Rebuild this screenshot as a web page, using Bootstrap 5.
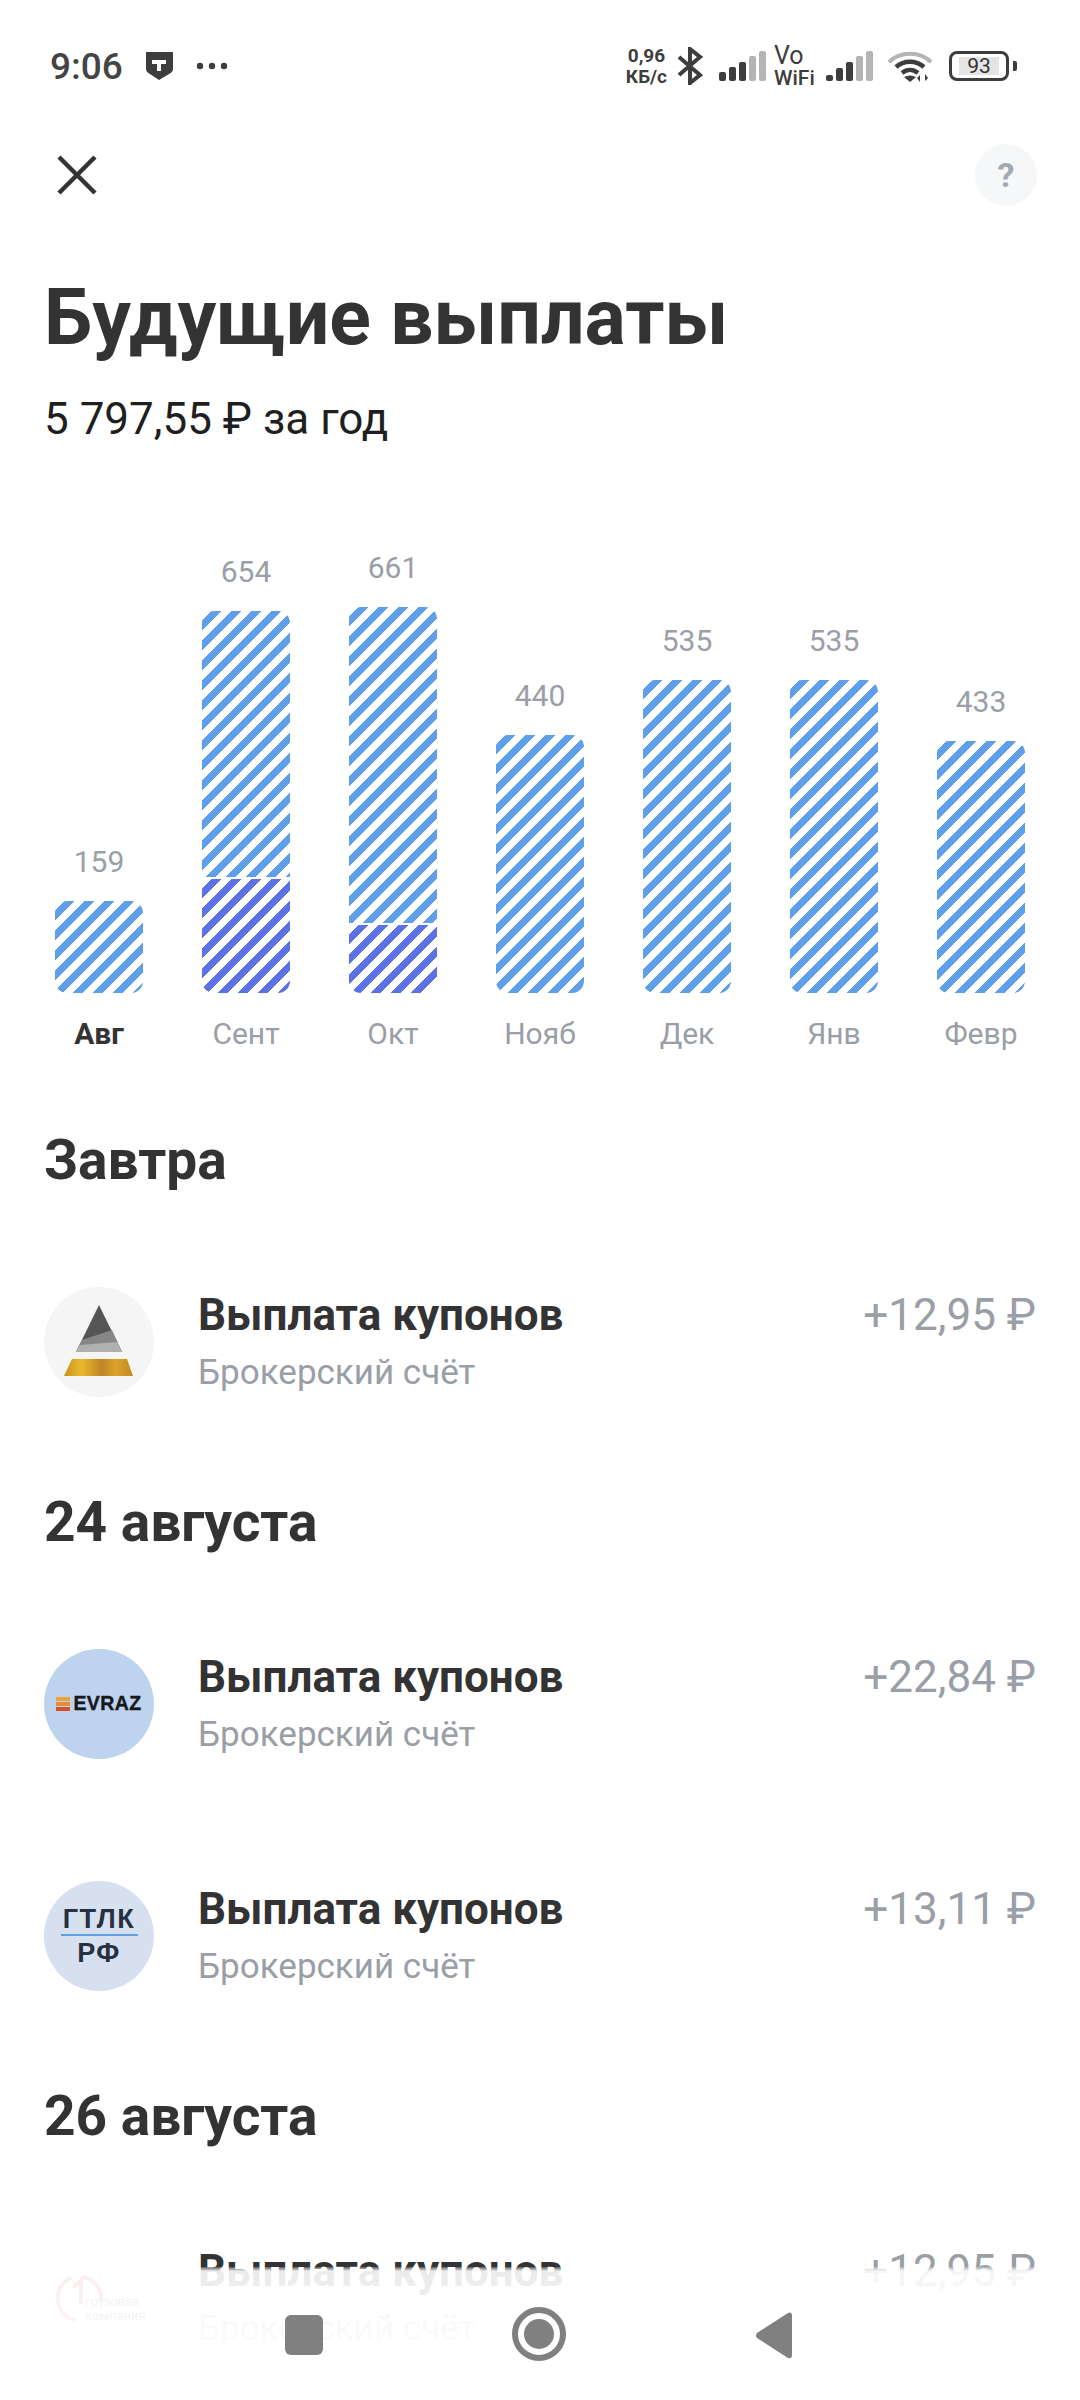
<!DOCTYPE html>
<html lang="ru">

<head>
    <meta charset="UTF-8">
    <meta name="viewport" content="width=device-width, initial-scale=1.0">
    <title>Будущие выплаты</title>
    <link href="https://cdn.jsdelivr.net/npm/bootstrap@5.3.0/dist/css/bootstrap.min.css" rel="stylesheet">
    <style>
        html, body { height: 2400px; overflow: hidden; background: #fff; }
        body { font-family: Roboto, "Liberation Sans", sans-serif; color: #333; }

        .phone-screen { width: 1080px; height: 2400px; position: relative; overflow: hidden; }

        /* status bar */
        .status-bar { height: 132px; padding: 0 63px 0 50px; }
        .status-time { font-size: 37px; font-weight: 500; line-height: 1; width: 96px; color: #444; }
        .status-dots { margin-left: 23px; }
        .status-net { font-size: 19px; font-weight: 700; line-height: 21px; color: #3d3d3d; white-space: nowrap; text-align: center; }
        .status-vo { color: #3d3d3d; width: 42px; white-space: nowrap; }
        .status-vo-top { font-size: 25px; line-height: 22px; }
        .status-vo-low { font-size: 21px; font-weight: 500; line-height: 18px; margin-top: 2px; }
        .st-gap { margin-left: 10px; }
        .st-gap-sm { margin-left: 7px; }
        .st-gap-lg { margin-left: 13px; }
        .st-gap-xl { margin-left: 16px; }
        .batt-box { width: 60px; height: 30px; border: 3px solid #3d3d3d; border-radius: 8px; padding: 3px; }
        .batt-fill { height: 100%; width: 84%; background: #e4e4e4; font-size: 21px; line-height: 18px; text-align: center; color: #333; }
        .batt-tip { width: 4px; height: 10px; background: #3d3d3d; border-radius: 0 2px 2px 0; margin-left: 4px; }

        /* top actions */
        .top-actions { height: 62px; padding: 0 43px 0 57px; margin-top: 12px; }
        .help-btn { width: 62px; height: 62px; border-radius: 50%; background: #f6f7f8; color: #a3a9b1; font-size: 34px; font-weight: 700; line-height: 1; }

        .page-title { font-size: 77px; font-weight: 700; line-height: 88px; margin: 68px 0 0 44px; color: #333; }
        .page-sum { font-size: 44px; line-height: 50px; margin: 32px 0 0 44px; color: #1f1f1f; }

        /* chart */
        .pay-chart { height: 450px; margin-top: 158px; padding: 0 55px; gap: 59px; }
        .chart-col { width: 88px; }
        .chart-val { font-size: 30px; line-height: 36px; color: #9a9ea6; margin-bottom: 21px; text-align: center; white-space: nowrap; }
        .chart-bar { border-radius: 12px; overflow: hidden; }
        .seg-blue { background: repeating-linear-gradient(135deg, #fff 0, #fff 6.5px, #5f9fea 6.5px, #5f9fea 14.14px); }
        .seg-indigo { background: repeating-linear-gradient(135deg, #fff 0, #fff 6.5px, #5d72e6 6.5px, #5d72e6 14.14px); margin-top: 2px; }
        .chart-month { font-size: 30px; line-height: 36px; color: #9a9ea6; margin: 23px -20px 0; text-align: center; }
        .chart-month.is-now { color: #333; font-weight: 700; }

        /* payments */
        .pay-feed { margin-top: 78px; }
        .pay-day { font-size: 55px; font-weight: 700; line-height: 60px; margin: 0 0 97px 44px; color: #333; }
        .pay-list { margin-bottom: 95px; gap: 122px; padding: 0 44px; }
        .pay-row { height: 110px; }
        .pay-logo { width: 110px; height: 110px; flex: none; border-radius: 50%; margin-right: 44px; }
        .pay-text { padding-top: 4px; gap: 10px; }
        .pay-name { font-size: 44px; font-weight: 700; line-height: 48px; color: #333; }
        .pay-acc { font-size: 35px; line-height: 48px; color: #9a9ea6; }
        .pay-sum { font-size: 44px; line-height: 48px; padding-top: 4px; color: #9a9ea6; }

        .logo-gold { background: #f5f5f5; }
        .logo-evraz { background: #bdd3ee; gap: 3px; }
        .evraz-name { font-family: "Liberation Sans", sans-serif; font-size: 19.5px; font-weight: 700; color: #16181c; letter-spacing: .4px; -webkit-text-stroke: .4px #16181c; }
        .evraz-flag { width: 14px; height: 14px; background: linear-gradient(#eda33a 0 30%, #bdd3ee 30% 38%, #e98a34 38% 64%, #bdd3ee 64% 72%, #d8502c 72%); }
        .logo-gtlk { background: #d7e0ef; color: #27303f; font-family: "Liberation Sans", sans-serif; font-weight: 700; }
        .gtlk-top { font-size: 27px; line-height: 28px; letter-spacing: 1.5px; }
        .gtlk-line { width: 77px; height: 2px; background: #62a0e6; margin: 1px 0 3px; }
        .gtlk-low { font-size: 27px; line-height: 28px; letter-spacing: 1.5px; }
        .logo-cargo { padding-left: 12px; }
        .cargo-name { font-size: 13px; line-height: 14px; color: #555; margin: 22px 0 0 -19px; white-space: nowrap; }

        /* nav bar over list */
        .nav-fade { position: absolute; left: 0; right: 0; bottom: 0; height: 133px;
            background: linear-gradient(rgba(255,255,255,.2) 0, rgba(255,255,255,.9) 4px, rgba(255,255,255,.94) 60px, #fff 100%); }
        .nav-btns { position: absolute; left: 0; right: 0; top: 2307px; height: 55px; }
        .nav-square { width: 38px; height: 40px; border-radius: 6px; background: #808080; position: absolute; left: 285px; top: 8px; }
        .nav-round { width: 54px; height: 54px; border-radius: 50%; border: 6px solid #808080; padding: 6px; position: absolute; left: 512px; top: 0; }
        .nav-round span { display: block; width: 30px; height: 30px; border-radius: 50%; background: #808080; }
        .nav-back { position: absolute; left: 755px; top: 5px; }
    </style>
</head>

<body>
    <div class="phone-screen">
        <!-- status bar -->
        <div class="status-bar d-flex align-items-center">
            <div class="status-time">9:06</div>
            <svg width="27" height="28" viewBox="0 0 27 28">
                <path d="M0 0h27v17q0 3-4 5l-10 6-9-6q-4-2-4-5z" fill="#3d3d3d" />
                <path d="M6 8h14v4h-5v7h-4v-7H6z" fill="#fff" />
            </svg>
            <svg class="status-dots" width="32" height="8" viewBox="0 0 32 8" fill="#3d3d3d">
                <circle cx="4" cy="4" r="3.2" />
                <circle cx="16" cy="4" r="3.2" />
                <circle cx="28" cy="4" r="3.2" />
            </svg>
            <div class="ms-auto d-flex align-items-center">
                <div class="status-net">0,96<br>КБ/с</div>
                <svg class="st-gap" width="26" height="38" viewBox="0 0 26 38" fill="none" stroke="#3d3d3d" stroke-width="4">
                    <path d="M2 10l21 18-10 8V2l10 8L2 28" />
                </svg>
                <svg class="st-gap-xl" width="48" height="30" viewBox="0 0 48 30">
                    <rect x="0" y="21" width="7" height="9" rx="2" fill="#3d3d3d" />
                    <rect x="10" y="16" width="7" height="14" rx="2" fill="#3d3d3d" />
                    <rect x="20" y="11" width="7" height="19" rx="2" fill="#3d3d3d" />
                    <rect x="30" y="5" width="7" height="25" rx="2" fill="#b4b4b4" />
                    <rect x="40" y="0" width="7" height="30" rx="2" fill="#b4b4b4" />
                </svg>
                <div class="status-vo st-gap-sm">
                    <div class="status-vo-top">Vo</div>
                    <div class="status-vo-low">WiFi</div>
                </div>
                <svg class="st-gap" width="48" height="30" viewBox="0 0 48 30">
                    <rect x="0" y="24" width="7" height="6" rx="2" fill="#3d3d3d" />
                    <rect x="10" y="17" width="7" height="13" rx="2" fill="#3d3d3d" />
                    <rect x="20" y="11" width="7" height="19" rx="2" fill="#3d3d3d" />
                    <rect x="30" y="5" width="7" height="25" rx="2" fill="#b4b4b4" />
                    <rect x="40" y="0" width="7" height="30" rx="2" fill="#b4b4b4" />
                </svg>
                <svg class="st-gap-lg" width="46" height="32" viewBox="0 0 46 32" fill="none">
                    <path d="M2 12C13 1 33 1 44 12" stroke="#b4b4b4" stroke-width="4" />
                    <path d="M9 17C17 10 29 10 37 17" stroke="#3d3d3d" stroke-width="4.5" />
                    <path d="M15 23C20 19 26 19 31 23" stroke="#3d3d3d" stroke-width="4.5" />
                    <path d="M23 32l-6-5q6-3 12 0z" fill="#3d3d3d" />
                    <path d="M33 32v-7l-3 3zM38 24v7l3-3z" fill="#3d3d3d" />
                </svg>
                <div class="batt-box ms-3">
                    <div class="batt-fill mx-auto">93</div>
                </div>
                <div class="batt-tip"></div>
            </div>
        </div>

        <!-- close / help -->
        <div class="top-actions d-flex align-items-center justify-content-between">
            <svg width="40" height="40" viewBox="0 0 40 40" stroke="#333" stroke-width="4.5" fill="none">
                <path d="M2 2l36 36M38 2L2 38" />
            </svg>
            <div class="help-btn d-flex align-items-center justify-content-center">?</div>
        </div>

        <h1 class="page-title">Будущие выплаты</h1>
        <div class="page-sum">5 797,55 ₽ за год</div>

        <!-- chart -->
        <div class="pay-chart d-flex align-items-end">
            <div class="chart-col">
                <div class="chart-val">159</div>
                <div class="chart-bar"><div class="seg-blue" style="height: 92px"></div></div>
                <div class="chart-month is-now">Авг</div>
            </div>
            <div class="chart-col">
                <div class="chart-val">654</div>
                <div class="chart-bar">
                    <div class="seg-blue" style="height: 266px"></div>
                    <div class="seg-indigo" style="height: 114px"></div>
                </div>
                <div class="chart-month">Сент</div>
            </div>
            <div class="chart-col">
                <div class="chart-val">661</div>
                <div class="chart-bar">
                    <div class="seg-blue" style="height: 316px"></div>
                    <div class="seg-indigo" style="height: 68px"></div>
                </div>
                <div class="chart-month">Окт</div>
            </div>
            <div class="chart-col">
                <div class="chart-val">440</div>
                <div class="chart-bar"><div class="seg-blue" style="height: 258px"></div></div>
                <div class="chart-month">Нояб</div>
            </div>
            <div class="chart-col">
                <div class="chart-val">535</div>
                <div class="chart-bar"><div class="seg-blue" style="height: 313px"></div></div>
                <div class="chart-month">Дек</div>
            </div>
            <div class="chart-col">
                <div class="chart-val">535</div>
                <div class="chart-bar"><div class="seg-blue" style="height: 313px"></div></div>
                <div class="chart-month">Янв</div>
            </div>
            <div class="chart-col">
                <div class="chart-val">433</div>
                <div class="chart-bar"><div class="seg-blue" style="height: 252px"></div></div>
                <div class="chart-month">Февр</div>
            </div>
        </div>

        <!-- payments -->
        <div class="pay-feed">
            <h2 class="pay-day">Завтра</h2>
            <div class="pay-list d-flex flex-column">
                <div class="pay-row d-flex">
                    <div class="pay-logo logo-gold">
                        <svg width="110" height="110" viewBox="0 0 110 110">
                            <defs>
                                <linearGradient id="goldBar" x1="0" x2="1" y1="0" y2="0">
                                    <stop offset="0" stop-color="#c8901c" />
                                    <stop offset=".25" stop-color="#eab92f" />
                                    <stop offset=".55" stop-color="#bd8423" />
                                    <stop offset=".75" stop-color="#dca22c" />
                                    <stop offset="1" stop-color="#c08a22" />
                                </linearGradient>
                            </defs>
                            <path d="M55 18L32 65h46z" fill="#555" />
                            <path d="M38 53L68 43l10 22H32z" fill="#868686" />
                            <path d="M36 58L73 55l5 10H32z" fill="#b0b0b0" />
                            <path d="M28 72h55l6 17H20z" fill="url(#goldBar)" />
                        </svg>
                    </div>
                    <div class="pay-text d-flex flex-column flex-grow-1">
                        <div class="pay-name">Выплата купонов</div>
                        <div class="pay-acc">Брокерский счёт</div>
                    </div>
                    <div class="pay-sum">+12,95 ₽</div>
                </div>
            </div>

            <h2 class="pay-day">24 августа</h2>
            <div class="pay-list d-flex flex-column">
                <div class="pay-row d-flex">
                    <div class="pay-logo logo-evraz d-flex align-items-center justify-content-center">
                        <span class="evraz-flag"></span>
                        <span class="evraz-name">EVRAZ</span>
                    </div>
                    <div class="pay-text d-flex flex-column flex-grow-1">
                        <div class="pay-name">Выплата купонов</div>
                        <div class="pay-acc">Брокерский счёт</div>
                    </div>
                    <div class="pay-sum">+22,84 ₽</div>
                </div>
                <div class="pay-row d-flex">
                    <div class="pay-logo logo-gtlk d-flex flex-column align-items-center justify-content-center">
                        <div class="gtlk-top">ГТЛК</div>
                        <div class="gtlk-line"></div>
                        <div class="gtlk-low">РФ</div>
                    </div>
                    <div class="pay-text d-flex flex-column flex-grow-1">
                        <div class="pay-name">Выплата купонов</div>
                        <div class="pay-acc">Брокерский счёт</div>
                    </div>
                    <div class="pay-sum">+13,11 ₽</div>
                </div>
            </div>

            <h2 class="pay-day">26 августа</h2>
            <div class="pay-list d-flex flex-column">
                <div class="pay-row d-flex">
                    <div class="pay-logo logo-cargo d-flex align-items-center">
                        <svg class="flex-shrink-0" width="48" height="48" viewBox="0 0 48 48" fill="none" stroke="#d04a55" stroke-width="4">
                            <path d="M15 4A22 22 0 0 0 20 46M27 3A22 22 0 0 1 45 27" />
                            <path d="M17 14l8-8v24" />
                        </svg>
                        <div class="cargo-name">грузовая<br>компания</div>
                    </div>
                    <div class="pay-text d-flex flex-column flex-grow-1">
                        <div class="pay-name">Выплата купонов</div>
                        <div class="pay-acc">Брокерский счёт</div>
                    </div>
                    <div class="pay-sum">+12,95 ₽</div>
                </div>
            </div>
        </div>

        <!-- bottom navigation -->
        <div class="nav-fade"></div>
        <div class="nav-btns">
            <div class="nav-square"></div>
            <div class="nav-round"><span></span></div>
            <svg class="nav-back" width="38" height="47" viewBox="0 0 38 47">
                <path d="M33 1q4-2 4 3v39q0 4-4 3L2 26q-2-2 0-5z" fill="#808080" />
            </svg>
        </div>
    </div>

    <script src="https://cdn.jsdelivr.net/npm/bootstrap@5.3.0/dist/js/bootstrap.bundle.min.js"></script>
</body>

</html>
